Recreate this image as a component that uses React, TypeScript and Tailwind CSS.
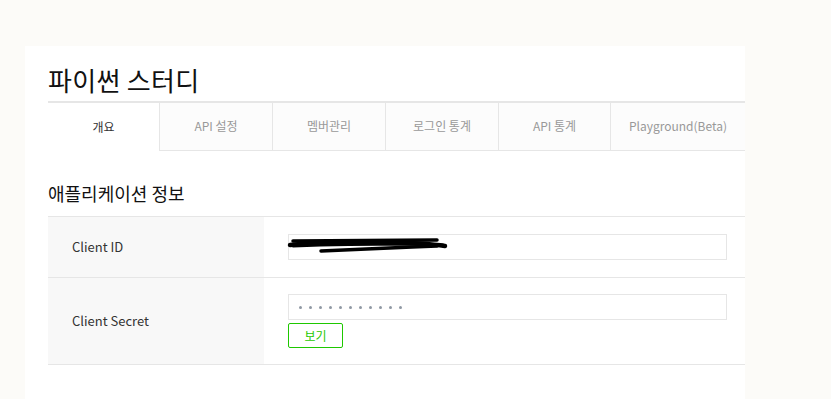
const tabs = ['개요', 'API 설정', '멤버관리', '로그인 통계', 'API 통계', 'Playground(Beta)'];

const Scribble = () => (
  <svg
    className="pointer-events-none absolute left-[-2px] top-[2px]"
    width="162"
    height="20"
    viewBox="0 0 162 20"
  >
    <g fill="none" stroke="#000" strokeLinecap="round" strokeLinejoin="round">
      <path d="M6 4 L150 3" strokeWidth="3.5" />
      <path d="M3 8 Q40 4 90 5 T158 9" strokeWidth="4.5" />
      <path d="M6 9 Q60 7 120 7 L156 8" strokeWidth="3" />
      <path d="M34 14 Q80 12 125 10 L150 9" strokeWidth="3.5" />
    </g>
  </svg>
);

export default function App() {
  return (
    <div
      className="min-h-screen bg-[#fcfbf8] pl-[25px] pt-[46px]"
      style={{ fontFamily: '"Noto Sans CJK KR", "Noto Sans", sans-serif' }}
    >
      <div className="min-h-[353px] w-[720px] bg-white pb-[34px] pl-[23px]">
        <h1 className="pb-[3px] pt-[16px] text-[26px] font-normal leading-[36px] tracking-[0.3px] text-[#111]">
          파이썬 스터디
        </h1>

        <div className="grid h-[50px] grid-cols-[111px_113px_113px_113px_112px_1fr] border-t-2 border-[#e6e6e6]">
          {tabs.map((tab, i) => (
            <div
              key={tab}
              className={
                i === 0
                  ? 'flex items-center justify-center bg-white pb-[1px] text-[12px] text-[#333]'
                  : 'flex items-center justify-center border-b border-l border-[#e6e6e6] bg-[#fcfcfc] pb-[1px] text-[12px] text-[#999]'
              }
            >
              {tab}
            </div>
          ))}
        </div>

        <h2 className="mb-[10px] mt-[29px] text-[18px] font-normal leading-[26px] text-[#111]">
          애플리케이션 정보
        </h2>

        <div className="border-t border-[#e6e6e6]">
          <div className="flex h-[61px] border-b border-[#e6e6e6]">
            <div className="flex w-[216px] items-center bg-[#f8f8f8] pl-[24px] text-[13px] text-[#333]">
              Client ID
            </div>
            <div className="flex flex-1 items-center pl-[24px] pr-[18px]">
              <div className="relative h-[26px] w-full border border-[#e6e6e6] bg-white">
                <Scribble />
              </div>
            </div>
          </div>

          <div className="flex h-[87px] border-b border-[#e6e6e6]">
            <div className="flex w-[216px] items-center bg-[#f8f8f8] pl-[24px] text-[13px] text-[#333]">
              Client Secret
            </div>
            <div className="flex flex-1 flex-col justify-center gap-[3px] pl-[24px] pr-[18px]">
              <div className="flex h-[26px] w-full items-center gap-[7px] border border-[#e6e6e6] bg-white pl-[10px]">
                {Array.from({ length: 11 }).map((_, i) => (
                  <span key={i} className="h-[3px] w-[3px] rounded-full bg-[#8f98a3]" />
                ))}
              </div>
              <button className="h-[25px] w-[55px] rounded-[2px] border border-[#1ec800] bg-white text-[12px] text-[#1ec800]">
                보기
              </button>
            </div>
          </div>
        </div>
      </div>
    </div>
  );
}
